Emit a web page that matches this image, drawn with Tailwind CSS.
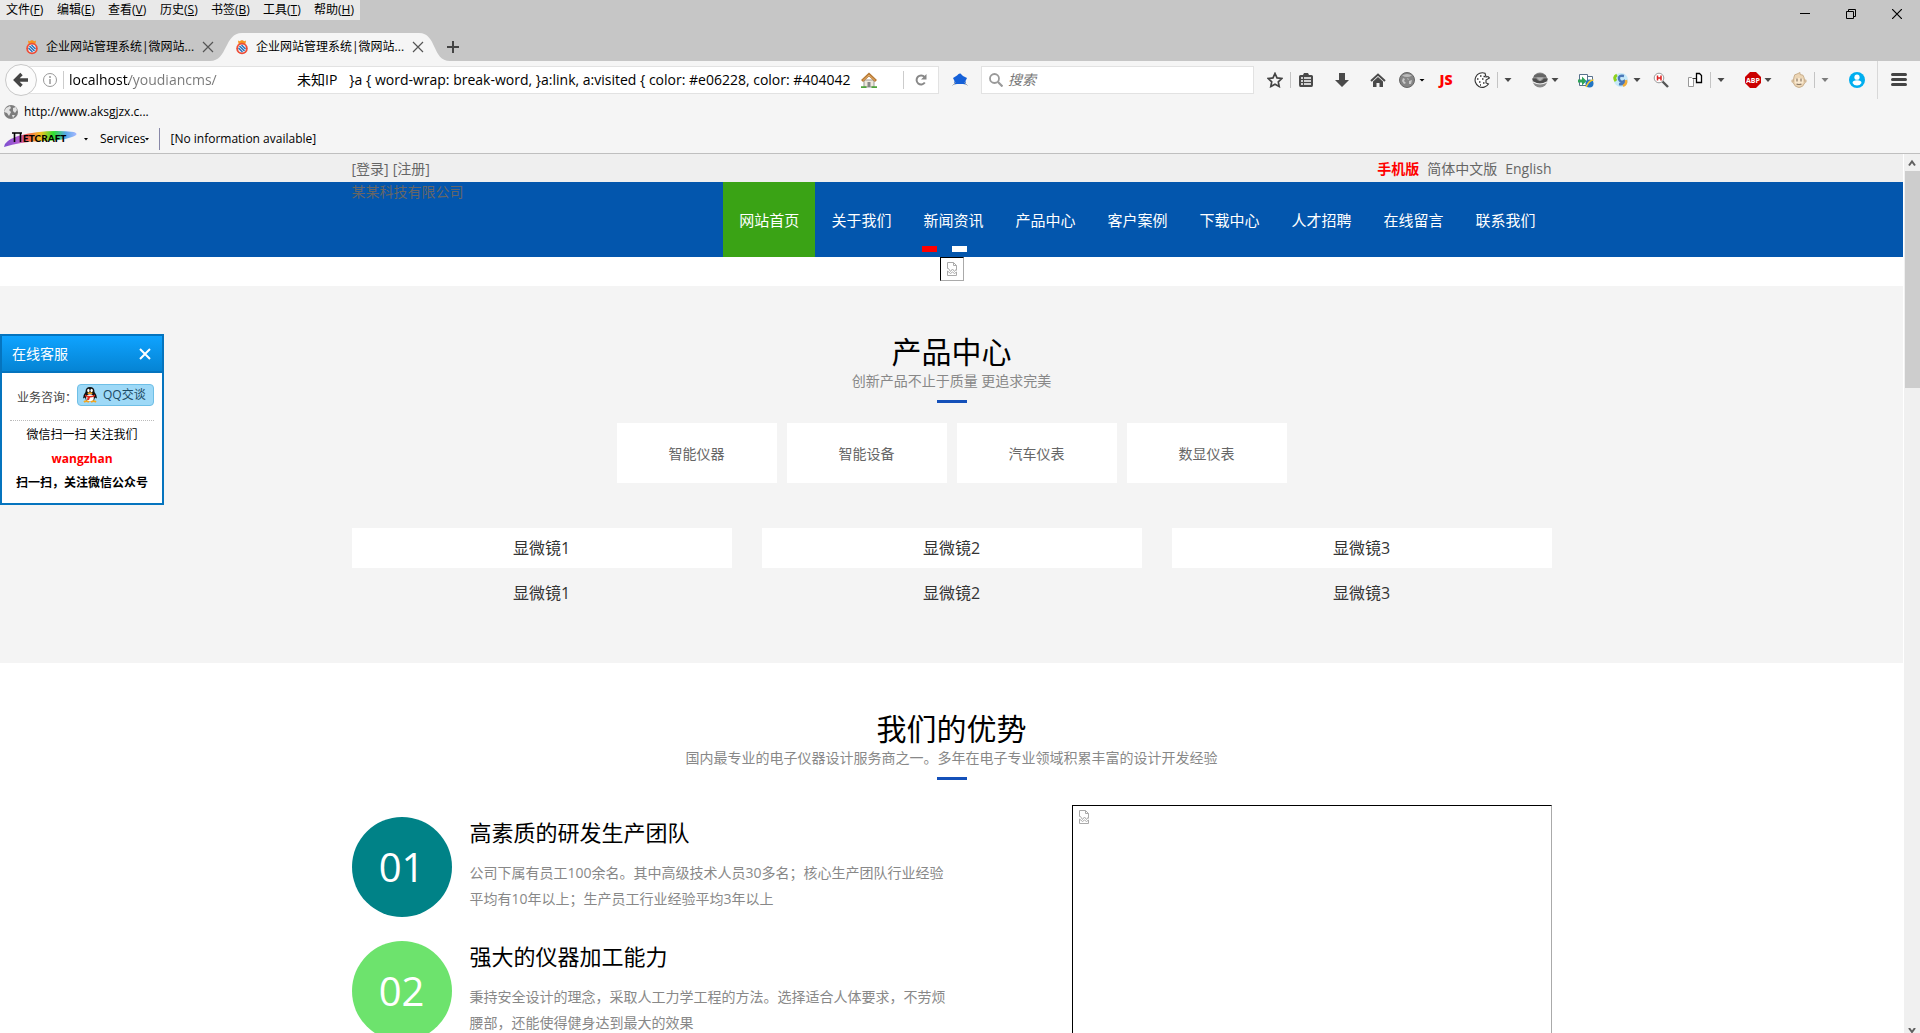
<!DOCTYPE html>
<html lang="zh-CN">
<head>
<meta charset="utf-8">
<meta name="viewport" content="width=device-width, initial-scale=1">
<title>企业网站管理系统|微网站</title>
<script src="https://cdn.jsdelivr.net/npm/@tailwindcss/browser@4"></script>
</head>
<body class="flex h-screen flex-col overflow-hidden bg-white font-['Open_Sans','Noto_Sans_CJK_SC',sans-serif] text-sm text-[#666]">

<!-- shared icon shapes -->
<svg class="hidden" aria-hidden="true">
  <symbol id="caret" viewBox="0 0 8 16"><path d="M.5 6h7L4 10z" fill="#4a4a4a"/></symbol>
  <symbol id="favicon" viewBox="0 0 16 16">
    <path d="M4 1.500l1.500.8L8 1l2.500 1.300 1.500-.8-.6 3.700H4.600z" fill="#f7931e"/>
    <circle cx="8" cy="9.500" r="5.800" fill="#ee4d37"/><circle cx="8" cy="9.500" r="3.900" fill="#e8f0fa"/>
    <path d="M5.500 7l5 5M7.500 5.900l4 4M4.500 9l4 4" stroke="#2471b8" stroke-width="1.400"/>
  </symbol>
  <symbol id="close" viewBox="0 0 12 12"><path d="M1 1l10 10M11 1L1 11" stroke="#555" stroke-width="1.200"/></symbol>
  <symbol id="broken" viewBox="0 0 14 16">
    <path d="M2.500 7.500v-6h6l3 3v5M8.500 1.500v3h3M2.500 7.500l1 0 2 3 2-2.500 2 2.500 2-2.500M2.500 10v4.500h9V11l-2 1.500-2-1.500-2 1.500-3-2.500" fill="none" stroke="#aaa"/>
  </symbol>
</svg>

<header class="shrink-0 border-b border-[#bfbfbf] bg-[#f5f5f5] text-black">
  <div class="flex h-[61px] flex-col bg-[#c6c6c6]">
    <div class="flex h-[33px] items-start justify-between">
      <nav aria-label="菜单" class="flex h-5 items-center gap-3 bg-[#e9e9e9] px-[6px] text-xs">
        <button class="w-[39px] whitespace-nowrap text-left">文件(<u>F</u>)</button>
        <button class="w-[39px] whitespace-nowrap text-left">编辑(<u>E</u>)</button>
        <button class="w-10 whitespace-nowrap text-left">查看(<u>V</u>)</button>
        <button class="w-[39px] whitespace-nowrap text-left">历史(<u>S</u>)</button>
        <button class="w-10 whitespace-nowrap text-left">书签(<u>B</u>)</button>
        <button class="w-[39px] whitespace-nowrap text-left">工具(<u>T</u>)</button>
        <button class="w-10 whitespace-nowrap text-left">帮助(<u>H</u>)</button>
      </nav>
      <div class="flex h-7 items-center gap-9 pr-[18px]">
        <button aria-label="最小化"><svg class="size-[10px]" viewBox="0 0 10 10"><path d="M0 4.500h10" stroke="#000"/></svg></button>
        <button aria-label="还原"><svg class="size-[10px]" viewBox="0 0 10 10"><path d="M.5 2.500h7v7h-7zM2.500 2.500v-2h7v7h-2" fill="none" stroke="#000"/></svg></button>
        <button aria-label="关闭"><svg class="size-[10px]" viewBox="0 0 10 10"><path d="M0 0l10 10M10 0L0 10" stroke="#000" stroke-width="1.200"/></svg></button>
      </div>
    </div>
    <div class="flex h-7 items-center pl-6 text-xs">
      <div class="flex w-[210px] items-center">
        <svg class="size-4"><use href="#favicon"/></svg>
        <span class="ml-[6px] w-[148px] overflow-hidden whitespace-nowrap">企业网站管理系统|微网站...</span>
        <button aria-label="关闭标签" class="ml-2"><svg class="size-3"><use href="#close"/></svg></button>
      </div>
      <div class="relative flex h-7 w-[210px] items-center">
        <svg class="absolute -left-6 top-0 h-7 w-[242px]" viewBox="0 0 242 28" aria-hidden="true"><path d="M0 28C18 28 14 0 32 0H209C227 0 222 28 240 28z" fill="#f5f5f5"/></svg>
        <svg class="relative size-4"><use href="#favicon"/></svg>
        <span class="relative ml-[6px] w-[148px] overflow-hidden whitespace-nowrap">企业网站管理系统|微网站...</span>
        <button aria-label="关闭标签" class="relative ml-2"><svg class="size-3"><use href="#close"/></svg></button>
      </div>
      <button aria-label="新标签" class="ml-[3px]"><svg class="size-3" viewBox="0 0 12 12"><path d="M6 0v12M0 6h12" stroke="#444" stroke-width="2"/></svg></button>
    </div>
  </div>

  <div class="flex h-[38px] items-center pr-[13px]">
    <button aria-label="后退" class="z-10 ml-[5px] flex size-8 shrink-0 items-center justify-center rounded-full border border-[#c8c8c8] bg-[#fbfbfb]">
      <svg class="size-4" viewBox="0 0 16 16"><path d="M8.500 2L2.500 8l6 6M3 8h12" fill="none" stroke="#444" stroke-width="3.400"/></svg>
    </button>
    <div class="-ml-3 flex h-7 min-w-0 flex-1 items-center border border-[#e2e2e2] bg-white pl-4 text-sm">
      <svg class="size-4 shrink-0" viewBox="0 0 16 16"><circle cx="8" cy="8" r="6.500" fill="none" stroke="#999"/><path d="M8 7v5M8 4v2" stroke="#999" stroke-width="1.500"/></svg>
      <span class="ml-[5px] h-[18px] w-px bg-[#ccc]"></span>
      <input aria-label="地址" value="localhost/youdiancms/" class="ml-[5px] w-[228px] min-w-0 bg-linear-[to_right,#000_60px,#777_60px] bg-clip-text text-sm text-transparent outline-none">
      <span class="whitespace-nowrap">未知IP</span>
      <span class="ml-3 min-w-0 flex-1 overflow-hidden whitespace-nowrap">}a { word-wrap: break-word, }a:link, a:visited { color: #e06228, color: #404042</span>
      <svg class="ml-1 size-4 shrink-0" viewBox="0 0 16 16"><path d="M3 8h10v7H3z" fill="#eee8dc" stroke="#999"/><path d="M1 9l7-6.500L15 9" fill="none" stroke="#b87a35" stroke-width="3"/><path d="M2 8.500L8 3l6 5.500" fill="none" stroke="#e5ae68"/><path d="M6.500 10h3v5h-3z" fill="#888"/><path d="M0 15.500h5.500M10.500 15.500H16" stroke="#4fa43c" stroke-width="2.500"/></svg>
      <span class="ml-[26px] h-[18px] w-px bg-[#ccc]"></span>
      <button aria-label="刷新" class="mx-[11px]"><svg class="size-3" viewBox="0 0 12 12"><path d="M9.800 8.500A4.500 4.500 0 1 1 9.500 3" fill="none" stroke="#888" stroke-width="2"/><path d="M11.500 0v5.500H6z" fill="#888"/></svg></button>
    </div>
    <svg class="mx-[13px] size-4 shrink-0" viewBox="0 0 16 16"><path d="M1 6l4-2.500Q7 1 8.500 1.500L11 4l4 2-1.500 3 .5 3.500-3-.5H5l-3 .5.500-3.500z" fill="#1560d8"/><path d="M.5 13.500l3-3M15.500 13.500l-3-3" stroke="#aaa"/></svg>
    <div class="flex h-7 w-[273px] shrink items-center border border-[#e2e2e2] bg-white pl-[7px]">
      <svg class="size-[14px] shrink-0" viewBox="0 0 14 14"><circle cx="5.500" cy="5.500" r="4.500" fill="none" stroke="#999" stroke-width="1.800"/><path d="M9 9l4.500 4.500" stroke="#999" stroke-width="2.200"/></svg>
      <input aria-label="搜索" placeholder="搜索" class="ml-[5px] min-w-0 flex-1 text-sm italic outline-none placeholder:text-[#777]">
    </div>
    <div class="flex h-full shrink-0 items-center pl-[13px]">
      <button aria-label="收藏"><svg class="block size-4" viewBox="0 0 16 16"><path d="M8 1.500l2 4.400 4.800.6-3.500 3.300.9 4.700L8 12.200l-4.200 2.300.9-4.700L1.200 6.500 6 5.900z" fill="none" stroke="#444" stroke-width="1.700"/></svg></button>
      <span class="ml-[7px] h-4 w-px bg-[#c4c4c4]"></span>
      <button aria-label="书签列表" class="ml-[7px]"><svg class="block size-4" viewBox="0 0 16 16"><path d="M1 4.500Q1 3 2.500 3H5l1-2h4l1 2h2.500Q15 3 15 4.500V13q0 2-1.500 2h-11Q1 15 1 13z" fill="#4a4a4a"/><path d="M3 6h2M6 6h7M3 9h2M6 9h7M3 12h2M6 12h7" stroke="#fff" stroke-width="1.500"/></svg></button>
      <button aria-label="下载" class="ml-5"><svg class="block size-4" viewBox="0 0 16 16"><path d="M5 1h6v7h4l-7 7-7-7h4z" fill="#4a4a4a"/></svg></button>
      <button aria-label="主页" class="ml-5"><svg class="block size-4" viewBox="0 0 16 16"><path d="M1 9l7-6.500L15 9" fill="none" stroke="#4a4a4a" stroke-width="2"/><path d="M3 9.500l5-4.500 5 4.500V15H9.500v-4h-3v4H3z" fill="#4a4a4a"/></svg></button>
      <button aria-label="全球" class="ml-[13px]"><svg class="block size-4" viewBox="0 0 16 16"><circle cx="8" cy="8" r="7.500" fill="#858585" stroke="#666"/><path d="M3 3.500q5-3 10 0-5 3-10 0z" fill="#bbb"/><path d="M4 6l2 1-1 2 2 2-2 1-2-3zM8 6l2 1-1 1zM10 9l3-1-1 4-2 0z" fill="#c8c8c8"/></svg></button>
      <svg class="ml-[3px] h-4 w-2" viewBox="0 0 8 16"><path d="M1.500 7h5L4 9.500z" fill="#000"/></svg>
      <button class="ml-3 flex w-4 justify-center text-sm font-extrabold leading-4 text-[#f00]">JS</button>
      <button aria-label="Cookie" class="ml-5"><svg class="block size-4" viewBox="0 0 16 16"><path d="M11 1.200A7.300 7.300 0 1 0 14.500 12l-2.500-1 0-3 3.500-2-1.500-1.500-2 .5z" fill="#fff" stroke="#333" stroke-width="1.100"/><path d="M6 4h1.500M9.500 4.500h1.500M3 7h1.500M8 7h1.500M5 10h1.500M9 11h1.500M6 13h1" stroke="#333" stroke-width="1.500"/></svg></button>
      <span class="ml-[7px] h-4 w-px bg-[#c4c4c4]"></span>
      <svg class="ml-[6px] h-4 w-2"><use href="#caret"/></svg>
      <button aria-label="代理" class="ml-5"><svg class="block size-4" viewBox="0 0 16 16"><circle cx="8" cy="8" r="7.500" fill="#8a8a8a"/><path d="M2 3.500q6-4 12 0v1.500H2z" fill="#666"/><path d="M0 6.500h4q4 5 8 0h4l-1.500 3q-6.500 4-13 0z" fill="#4d4d4d"/><path d="M1 10q7 4 14 0" stroke="#eee" fill="none" stroke-width="1.200"/><path d="M4.500 5.500h7L8 9z" fill="#b5b5b5"/></svg></button>
      <svg class="ml-[3px] h-4 w-2"><use href="#caret"/></svg>
      <button aria-label="切换浏览器" class="ml-[19px]"><svg class="block size-4" viewBox="0 0 16 16"><path d="M1.500 2.500h8v11h-8zM9.500 4.500h5v6h-5z" fill="#fff" stroke="#58718c"/><path d="M0 7.500h4V4.500l4.500 4.500L4 13.500v-3H0z" fill="#2fa45a"/><circle cx="11.500" cy="11.500" r="4" fill="#2275c4"/><path d="M8 15q3-7 7.500-7" stroke="#f3c72b" fill="none" stroke-width="1.500"/></svg></button>
      <button aria-label="同步" class="ml-[19px]"><svg class="block size-4" viewBox="0 0 16 16"><circle cx="8" cy="8" r="7" fill="#c6e9f9"/><path d="M3 9q-3-4 1-6" stroke="#8ed11c" stroke-width="3" fill="none"/><path d="M11 4Q5 3 6 7t5 2q1 4-5 3" stroke="#4a78b8" stroke-width="2.500" fill="none"/><path d="M13 8q1 4-3 6" stroke="#f3ad35" stroke-width="2.500" fill="none"/></svg></button>
      <svg class="ml-1 h-4 w-2"><use href="#caret"/></svg>
      <button aria-label="查找" class="ml-3"><svg class="block size-4" viewBox="0 0 16 16"><path d="M9 9l6 6" stroke="#555" stroke-width="2.400"/><circle cx="6" cy="6" r="4.800" fill="#fff" stroke="#999"/><path d="M4.500 3.500v5M8 3.500v5M4.500 6H8" stroke="#d22" stroke-width="1.500"/></svg></button>
      <button aria-label="复制页面" class="ml-[18px]"><svg class="block size-4" viewBox="0 0 16 16"><path d="M1.500 5.500h3l2 2v7h-5z" fill="#fff" stroke="#999"/><path d="M9.500 1.500h3l2 2v7h-5z" fill="#fff" stroke="#000" stroke-width="1.300"/><path d="M6 6.500h3" stroke="#333"/></svg></button>
      <span class="ml-[7px] h-4 w-px bg-[#c4c4c4]"></span>
      <svg class="ml-[6px] h-4 w-2"><use href="#caret"/></svg>
      <button aria-label="Adblock Plus" class="ml-5"><svg class="block size-4" viewBox="0 0 16 16"><path d="M5 0h6l5 5v6l-5 5H5l-5-5V5z" fill="#cb0000"/><text x="8" y="10.500" text-anchor="middle" font-size="7" font-weight="bold" fill="#fff">ABP</text></svg></button>
      <svg class="ml-[3px] h-4 w-2"><use href="#caret"/></svg>
      <button aria-label="脚本" class="ml-[19px]"><svg class="block size-4" viewBox="0 0 16 16"><circle cx="2" cy="9" r="1.800" fill="#d8bfa0"/><circle cx="14" cy="9" r="1.800" fill="#d8bfa0"/><path d="M3 5q0-3 3-3l3-1.500 0 2q4 0 4 3l1 5q-2 5-6 5t-6-5z" fill="#ecd5b4" stroke="#c9b08e"/><path d="M4 7q4-2 8 0v4q-4 4-8 0z" fill="#f9e8cf"/><path d="M6 6.500v3M10 6.500v3M5.500 12q2.500 1 5 0" stroke="#8b7a66" fill="none" stroke-width="1.200"/></svg></button>
      <span class="ml-[7px] h-4 w-px bg-[#c4c4c4]"></span>
      <svg class="ml-[6px] h-4 w-2 opacity-70"><use href="#caret"/></svg>
      <button aria-label="账户" class="ml-5"><svg class="block size-4" viewBox="0 0 16 16"><circle cx="8" cy="8" r="8" fill="#00aeef"/><circle cx="8" cy="5.200" r="2.600" fill="#fff"/><path d="M3.500 11q0-2.800 4.500-2.800t4.500 2.800q-1.500 2.500-4.500 2.500T3.500 11z" fill="#fff"/></svg></button>
      <span class="ml-3 h-full w-px bg-[#d8d8d8]"></span>
      <button aria-label="菜单" class="ml-[13px]"><svg class="block size-4" viewBox="0 0 16 16"><path d="M1.500 2.500h13M1.500 7.500h13M1.500 12.500h13" stroke="#444" stroke-width="3" stroke-linecap="round"/></svg></button>
    </div>
  </div>

  <div class="flex h-[26px] items-center gap-[5px] pl-[3px] text-xs">
    <svg class="size-4" viewBox="0 0 16 16"><circle cx="8" cy="8" r="7" fill="#7d7d7d"/><path d="M3 4l4-2 1 2-2 2 2 2-2 4-2-3-3-1zM10 4l3-1 1 3-2 3-2-2zM9 11l3 0-2 3z" fill="#e2e2e2"/></svg>
    <a href="#" class="text-black">http://www.aksgjzx.c...</a>
  </div>
  <div class="flex h-7 items-center pl-1 text-xs">
    <svg class="h-5 w-[74px]" viewBox="0 0 74 20" role="img" aria-label="Netcraft">
      <defs><linearGradient id="rainbow"><stop offset="0" stop-color="#7b4fd0"/><stop offset=".2" stop-color="#b05ad0"/><stop offset=".32" stop-color="#f05a50"/><stop offset=".5" stop-color="#f5c020"/><stop offset=".68" stop-color="#30e030"/><stop offset=".85" stop-color="#58a8e8"/><stop offset="1" stop-color="#a8b8ff"/></linearGradient></defs>
      <path d="M0 18Q0 12 14 7Q40 0 70 3q6 2-2 5Q58 12 36 12Q16 13 0 18z" fill="url(#rainbow)"/>
      <path d="M8 4h10M10.500 13V4M16.500 4v9" fill="none" stroke="#000" stroke-width="1.600"/>
      <text x="19" y="13" font-family="Lato" font-size="10" font-weight="900" fill="#000">ETCRAFT</text>
    </svg>
    <svg class="ml-1 h-4 w-2" viewBox="0 0 8 16"><path d="M2 7h4L4 9.500z" fill="#000"/></svg>
    <button class="ml-[10px] flex items-center">Services<svg class="h-4 w-1" viewBox="0 0 4 16"><path d="M0 7h4L2 9.500z" fill="#000"/></svg></button>
    <span class="ml-[10px] h-[22px] w-px bg-[#8888a8]"></span>
    <span class="ml-[10px]">[No information available]</span>
  </div>
</header>

<div class="relative flex min-h-0 flex-1">
  <main class="min-w-0 flex-1 overflow-hidden">
    <div class="bg-[#efefef]">
      <div class="mx-auto flex h-7 max-w-[1200px] items-center justify-between pt-[2px]">
        <div class="flex gap-1"><a href="#">[登录]</a><a href="#">[注册]</a></div>
        <div class="flex gap-2"><a href="#" class="font-bold text-[#f00]">手机版</a><a href="#">简体中文版</a><a href="#">English</a></div>
      </div>
    </div>

    <div class="bg-[#0356ad]">
      <div class="mx-auto flex h-[75px] max-w-[1200px] items-start justify-between">
        <a href="#" class="leading-5">某某科技有限公司</a>
        <nav class="flex h-[75px] text-[15px] leading-[77px] text-white">
          <a href="#" class="bg-[#3aa315] px-4">网站首页</a>
          <a href="#" class="px-4">关于我们</a>
          <a href="#" class="px-4">新闻资讯</a>
          <a href="#" class="px-4">产品中心</a>
          <a href="#" class="px-4">客户案例</a>
          <a href="#" class="px-4">下载中心</a>
          <a href="#" class="px-4">人才招聘</a>
          <a href="#" class="px-4">在线留言</a>
          <a href="#" class="px-4">联系我们</a>
        </nav>
      </div>
    </div>

    <!-- banner with its slide markers -->
    <div class="relative flex h-[29px] justify-center">
      <div class="absolute -top-[11px] flex w-[60px] gap-[15px]">
        <button aria-label="幻灯 1" class="h-[6px] w-[15px] bg-[#f00]"></button>
        <button aria-label="幻灯 2" class="h-[6px] w-[15px] bg-white"></button>
      </div>
      <div class="flex size-6 items-center justify-center border border-b-[#aaa] border-l-black border-r-[#aaa] border-t-black"><svg class="h-4 w-[14px]"><use href="#broken"/></svg></div>
    </div>

    <section class="h-[377px] bg-[#f4f4f4] pt-[46px]">
      <div class="flex flex-col items-center">
        <h2 class="text-[30px] leading-10 text-black">产品中心</h2>
        <p class="leading-[18px] text-[#888]">创新产品不止于质量 更追求完美</p>
        <span class="mt-[10px] h-[3px] w-[30px] bg-[#1450b9]"></span>
      </div>
      <div class="mt-5 flex justify-center gap-[10px]">
        <a href="#" class="h-[60px] w-40 bg-white text-center leading-[62px]">智能仪器</a>
        <a href="#" class="h-[60px] w-40 bg-white text-center leading-[62px]">智能设备</a>
        <a href="#" class="h-[60px] w-40 bg-white text-center leading-[62px]">汽车仪表</a>
        <a href="#" class="h-[60px] w-40 bg-white text-center leading-[62px]">数显仪表</a>
      </div>
      <div class="mx-auto mt-[45px] grid max-w-[1200px] grid-cols-3 gap-x-[30px] gap-y-[5px] text-center text-base leading-10 text-[#333]">
        <a href="#" class="bg-white">显微镜1</a>
        <a href="#" class="bg-white">显微镜2</a>
        <a href="#" class="bg-white">显微镜3</a>
        <a href="#">显微镜1</a>
        <a href="#">显微镜2</a>
        <a href="#">显微镜3</a>
      </div>
    </section>

    <section class="pt-[46px]">
      <div class="flex flex-col items-center">
        <h2 class="text-[30px] leading-10 text-black">我们的优势</h2>
        <p class="leading-[18px] text-[#888]">国内最专业的电子仪器设计服务商之一。多年在电子专业领域积累丰富的设计开发经验</p>
        <span class="mt-[10px] h-[3px] w-[30px] bg-[#1450b9]"></span>
      </div>
      <div class="mx-auto mt-[25px] flex max-w-[1200px] items-start justify-between">
        <ul class="flex w-[600px] flex-col gap-6 pt-3">
          <li class="flex h-[100px] gap-[18px]">
            <span class="flex size-[100px] shrink-0 items-center justify-center rounded-full bg-[#008287] text-[40px] text-white">01</span>
            <div>
              <h3 class="text-[22px] leading-[30px] text-black">高素质的研发生产团队</h3>
              <p class="mt-[13px] leading-[26px] text-[#888]">公司下属有员工100余名。其中高级技术人员30多名；核心生产团队行业经验<br>平均有10年以上；生产员工行业经验平均3年以上</p>
            </div>
          </li>
          <li class="flex h-[100px] gap-[18px]">
            <span class="flex size-[100px] shrink-0 items-center justify-center rounded-full bg-[#6de36d] text-[40px] text-white">02</span>
            <div>
              <h3 class="text-[22px] leading-[30px] text-black">强大的仪器加工能力</h3>
              <p class="mt-[13px] leading-[26px] text-[#888]">秉持安全设计的理念，采取人工力学工程的方法。选择适合人体要求，不劳烦<br>腰部，还能使得健身达到最大的效果</p>
            </div>
          </li>
        </ul>
        <div class="h-[400px] w-[480px] border border-b-[#aaa] border-l-black border-r-[#aaa] border-t-black px-1 py-[3px]"><svg class="h-4 w-[14px]"><use href="#broken"/></svg></div>
      </div>
    </section>
  </main>

  <div class="flex w-[17px] shrink-0 flex-col items-center border-l border-white bg-[#f0f0f0]" aria-hidden="true">
    <svg class="h-[17px] w-4" viewBox="0 0 16 17"><path d="M5 11.500l3-4 3 4" fill="none" stroke="#606060" stroke-width="2"/></svg>
    <span class="h-[217px] w-[15px] bg-[#cdcdcd]"></span>
    <svg class="mt-auto h-[5px] w-4" viewBox="0 0 16 5"><path d="M5 0l3 4 3-4" fill="none" stroke="#606060" stroke-width="2"/></svg>
  </div>

  <!-- floating customer-service panel -->
  <aside class="absolute left-0 top-[180px] w-[164px] border-2 border-[#0574be] bg-white pb-2 text-xs text-black">
    <div class="flex h-[37px] items-center justify-between border-b-2 border-[#0574be] bg-linear-to-b from-[#0fa3ff] to-[#0584d4] px-[10px] text-sm text-white">
      <span>在线客服</span>
      <button aria-label="关闭客服" class="mr-px"><svg class="block size-3" viewBox="0 0 12 12"><path d="M1 1l10 10M11 1L1 11" stroke="#fff" stroke-width="2"/></svg></button>
    </div>
    <div class="mx-2 flex h-12 items-center justify-between border-b border-dotted border-[#bbb] pl-[7px] text-[#444]">
      <span class="whitespace-nowrap pt-[2px]">业务咨询：</span>
      <button class="-ml-2 mb-1 flex h-[22px] w-[77px] shrink-0 items-center gap-[5px] whitespace-nowrap rounded-sm border border-[#6fbfe6] bg-[#9ed9f7] pl-1 text-[#1c4a63]">
        <svg class="size-4 shrink-0" viewBox="0 0 16 16"><path d="M8 0Q3.500 0 3.500 5 1 8 1 11.500l2-1q1 4.500 5 4.500t5-4.500l2 1Q15 8 12.500 5 12.500 0 8 0z" fill="#111"/><ellipse cx="8" cy="11" rx="3.800" ry="3.800" fill="#fff"/><ellipse cx="6.400" cy="3.500" rx="1.200" ry="1.700" fill="#fff"/><ellipse cx="9.600" cy="3.500" rx="1.200" ry="1.700" fill="#fff"/><ellipse cx="8" cy="6.200" rx="2.600" ry=".9" fill="#f5a51d"/><path d="M3 7.500q5 3 10 0v1.800q-3 1.200-5 1.200L7 13H5l.5-3L3 9.300z" fill="#e5281c"/><path d="M2 15q2-1.800 5 0M9 15q3-1.800 5 0" stroke="#f5a51d" stroke-width="1.800" fill="none"/></svg>QQ交谈</button>
    </div>
    <div class="pt-[2px] text-center leading-6">
      <p>微信扫一扫 关注我们</p>
      <p class="font-bold text-[#f00]">wangzhan</p>
      <p class="font-bold">扫一扫，关注微信公众号</p>
    </div>
  </aside>
</div>
</body>
</html>
